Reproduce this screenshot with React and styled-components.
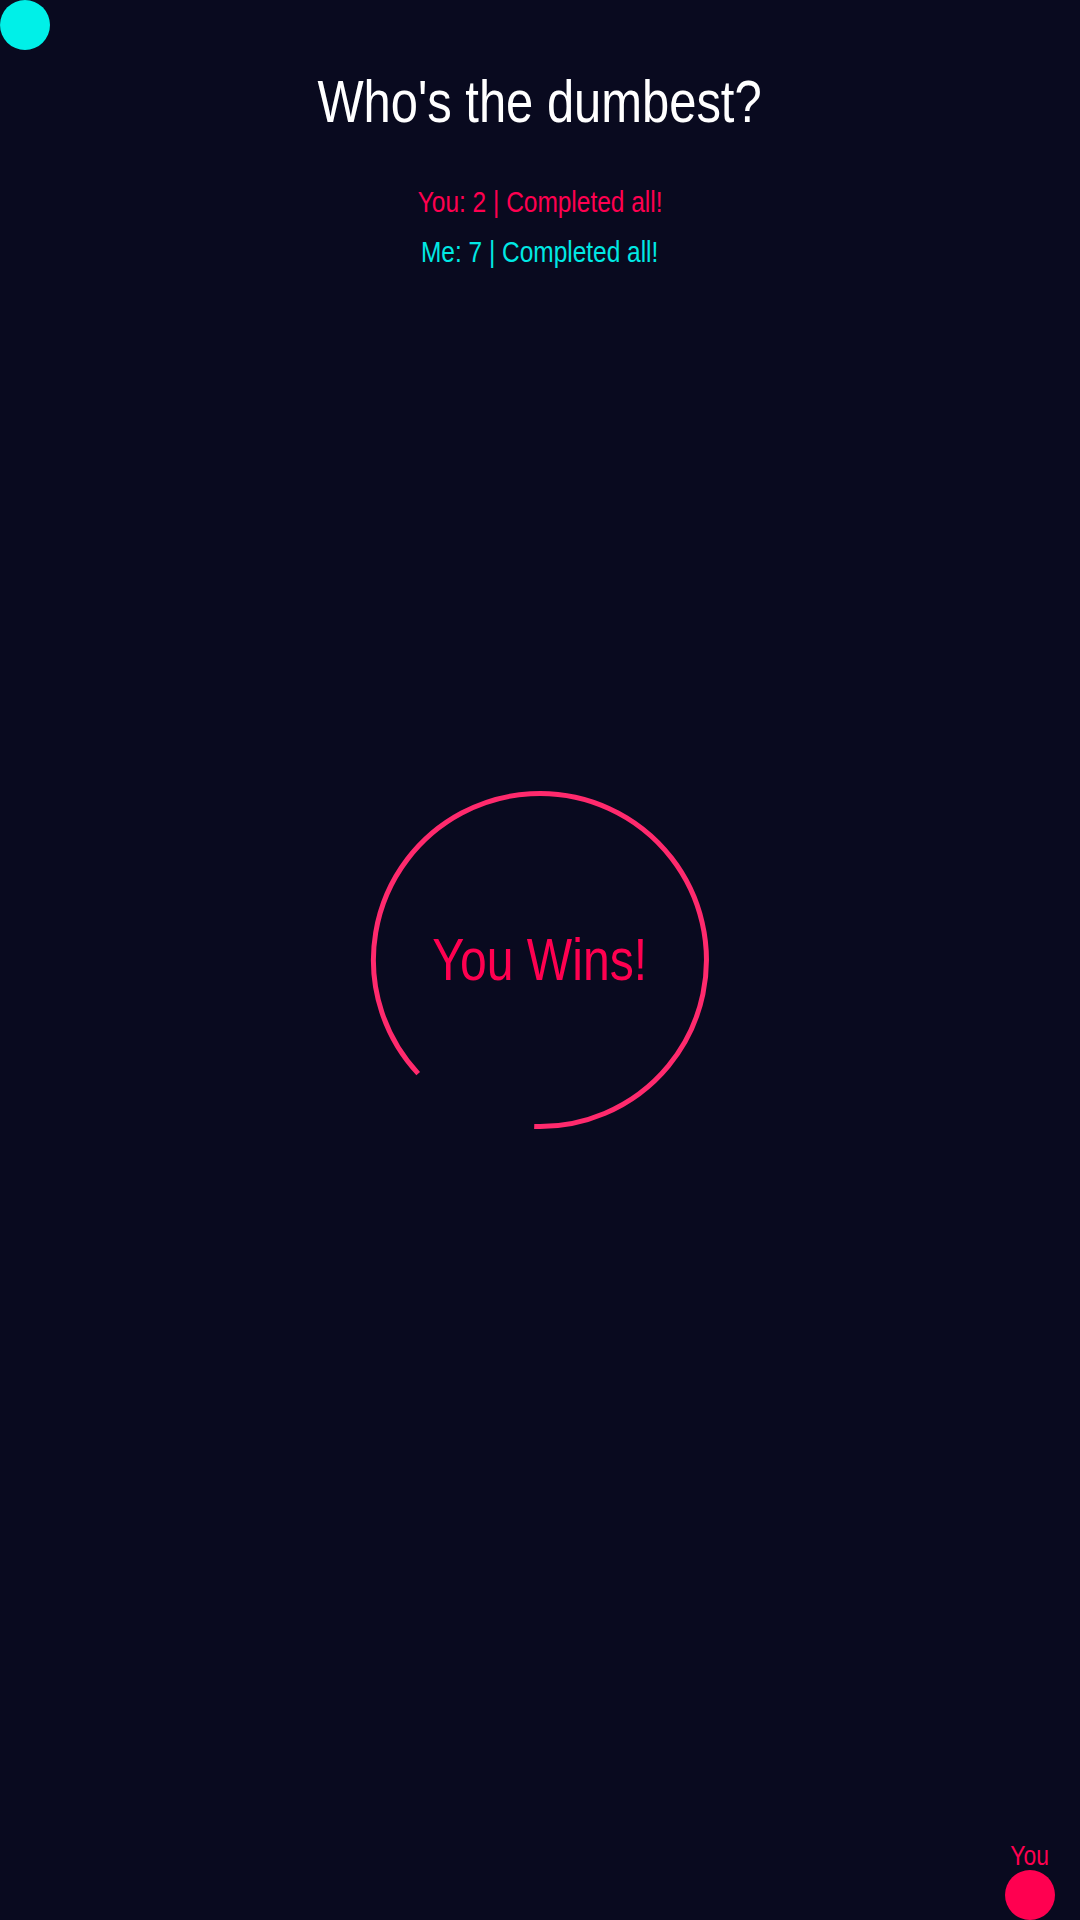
import React from "react";
import styled, { createGlobalStyle } from "styled-components";

const Global = createGlobalStyle`
  html, body { margin: 0; padding: 0; background: #090a1f; }
  body { font-family: "Liberation Sans Narrow", "Arial Narrow", "Liberation Sans", sans-serif; }
`;

const Page = styled.div`
  position: relative;
  width: 1080px;
  height: 1920px;
  overflow: hidden;
  background: #090a1f;
  display: grid;
  grid-template-areas: "stack";
`;

const Narrow = styled.span`
  display: inline-block;
  transform: scaleX(0.815);
  transform-origin: center;
  white-space: nowrap;
`;

const Header = styled.header`
  grid-area: stack;
  align-self: start;
  display: flex;
  flex-direction: column;
  align-items: center;
  padding-top: 72px;
`;

const Title = styled.h1`
  margin: 0 0 45px;
  font-size: 60px;
  line-height: 60px;
  font-weight: 400;
  color: #ffffff;
`;

const ScoreLine = styled.div`
  font-size: 30px;
  line-height: 50px;
  color: ${(p) => p.$color};
`;

const Result = styled.div`
  grid-area: stack;
  place-self: center;
  position: relative;
  width: 350px;
  height: 350px;
  display: flex;
  align-items: center;
  justify-content: center;
`;

const Ring = styled.svg`
  position: absolute;
  inset: 0;
`;

const ResultText = styled.div`
  position: relative;
  font-size: 59px;
  line-height: 1;
  color: #ff0050;
`;

const Token = styled.div`
  position: absolute;
  display: flex;
  flex-direction: column;
  align-items: center;
  ${(p) => (p.$corner === "tl" ? "top: 0; left: 0;" : "bottom: 0; right: 25px;")}
`;

const Dot = styled.div`
  width: 50px;
  height: 50px;
  border-radius: 50%;
  background: ${(p) => p.$color};
`;

const TokenLabel = styled.div`
  font-size: 28px;
  line-height: 28px;
  color: #ff0050;
`;

export default function App() {
  return (
    <>
      <Global />
      <Page>
        <Header>
          <Title><Narrow>Who's the dumbest?</Narrow></Title>
          <ScoreLine $color="#ff0050"><Narrow>You: 2 | Completed all!</Narrow></ScoreLine>
          <ScoreLine $color="#00e8e4"><Narrow>Me: 7 | Completed all!</Narrow></ScoreLine>
        </Header>
        <Result>
          <Ring width="350" height="350" viewBox="0 0 350 350">
            <path
              d="M 53.2 288.6 A 166.5 166.5 0 1 1 169.2 341.4"
              fill="none"
              stroke="#ff2a6d"
              strokeWidth="5"
            />
          </Ring>
          <ResultText><Narrow>You Wins!</Narrow></ResultText>
        </Result>
        <Token $corner="tl">
          <Dot $color="#00f0e8" />
        </Token>
        <Token $corner="br">
          <TokenLabel><Narrow>You</Narrow></TokenLabel>
          <Dot $color="#ff0050" />
        </Token>
      </Page>
    </>
  );
}
